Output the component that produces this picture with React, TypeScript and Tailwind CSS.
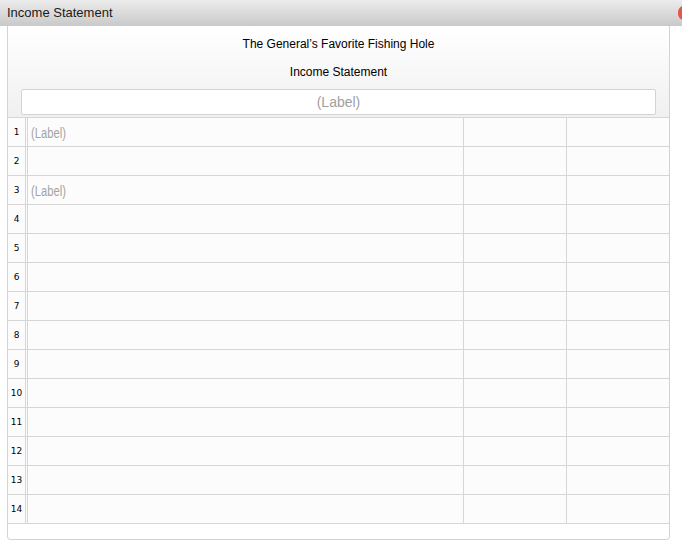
import React from 'react';

const rows = Array.from({ length: 14 }, (_, i) => i + 1);
const labels: Record<number, string> = { 1: '(Label)', 3: '(Label)' };

export default function App() {
  return (
    <div className="w-[682px] h-[550px] bg-white overflow-hidden relative font-['Liberation_Sans',Arial,sans-serif]">
      {/* title bar */}
      <div className="h-[26px] bg-gradient-to-b from-[#ececec] to-[#c9c9c9] flex items-center pl-[7px] text-[13px] text-[#1a1a1a]">
        Income Statement
      </div>
      <div className="absolute right-[-8px] top-[6px] w-[12px] h-[14px] rounded-full bg-[#e0584c]" />

      <div className="mx-[7px] w-[663px] border-x border-b border-[#d3d3d3] rounded-b-[4px]">
        {/* header */}
        <div className="h-[91px] bg-gradient-to-b from-white to-[#f0f0f0] flex flex-col items-center pt-[11px]">
          <div className="text-[12px] leading-[14px] text-black">The General&rsquo;s Favorite Fishing Hole</div>
          <div className="text-[12px] leading-[14px] text-black mt-[14px]">Income Statement</div>
          <div className="mt-[10px] w-[635px] h-[26px] bg-white border border-[#d3d3d3] rounded-[2px] flex items-center justify-center text-[14px] text-[#a0a0a0]">
            (Label)
          </div>
        </div>

        {/* grid */}
        <div className="border-t border-[#d6d6d6] bg-[#fcfcfc]">
          {rows.map((n) => (
            <div key={n} className="flex h-[29px] border-b border-[#d6d6d6]">
              <div className="w-[17px] flex items-center justify-center pt-[2px] text-[9px] text-black font-['DejaVu_Sans',sans-serif]">
                {n}
              </div>
              <div className="w-[3px] border-x border-[#d6d6d6]" />
              <div className="w-[436px] border-r border-[#d6d6d6] flex items-center pl-[3px] pt-[2px]">
                {labels[n] && (
                  <span className="text-[14px] text-[#a4a4a4] inline-block origin-left scale-x-[0.8]">
                    {labels[n]}
                  </span>
                )}
              </div>
              <div className="w-[103px] border-r border-[#d6d6d6]" />
              <div className="flex-1" />
            </div>
          ))}
        </div>
        <div className="h-[15px] bg-white rounded-b-[4px]" />
      </div>
    </div>
  );
}
